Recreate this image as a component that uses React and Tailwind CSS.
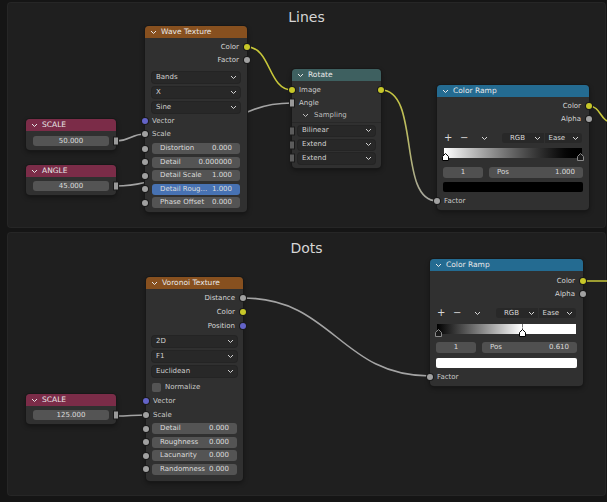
import React from "react";

const font = "font-['DejaVu_Sans',sans-serif]";

const SOCK = {
  yellow: "w-[6px] h-[6px] rounded-full bg-[#c7c729]",
  gray: "w-[6px] h-[6px] rounded-full bg-[#a1a1a1]",
  purple: "w-[6px] h-[6px] rounded-full bg-[#6363c7]",
  square: "w-[4px] h-[7px] bg-[#9a9a9a]",
  dark: "w-[4px] h-[7px] bg-[#5c5c5c]",
};

const Socket = ({ kind, side }) => (
  <span
    className={`absolute top-1/2 -translate-y-1/2 ${
      side === "left" ? "left-0 -translate-x-1/2" : "right-0 translate-x-1/2"
    } ${SOCK[kind]} shadow-[0_0_0_1px_#1a1a1a]`}
  />
);

const Chevron = ({ className = "" }) => (
  <svg width="7" height="5" viewBox="0 0 7 5" className={className}>
    <polyline points="1,1 3.5,3.5 6,1" fill="none" stroke="currentColor" strokeWidth="1" />
  </svg>
);

const Node = ({ pos, head, title, children, body = "" }) => (
  <div
    className={`absolute ${pos} rounded-[4px] bg-[#303030] shadow-[0_0_0_1px_#181818,0_2px_5px_rgba(0,0,0,0.45)] ${font} text-[7px] text-[#cacaca]`}
  >
    <div className={`${head} h-[12px] rounded-t-[4px] flex items-center gap-[4px] pl-[5px] text-[7.5px] text-[#e8e8e8]`}>
      <Chevron />
      <span>{title}</span>
    </div>
    <div className={body}>{children}</div>
  </div>
);

const Out = ({ label, s, h = "h-[13px]" }) => (
  <div className={`relative ${h} flex items-center justify-end pr-[8px] text-[#d6d6d6]`}>
    {label}
    <Socket kind={s} side="right" />
  </div>
);

const In = ({ label, s, h = "h-[13px]", cls = "" }) => (
  <div className={`relative ${h} ${cls} flex items-center pl-[7px]`}>
    <Socket kind={s} side="left" />
    {label}
  </div>
);

const Drop = ({ label, cls, sock, mx = "px-[7px]" }) => (
  <div className={`relative ${mx} ${cls}`}>
    {sock && <Socket kind={sock} side="left" />}
    <div className="h-full rounded-[3px] bg-[#282828] shadow-[0_0_0_1px_#242424] flex items-center justify-between pl-[4px] pr-[3px] text-[#d2d2d2]">
      <span>{label}</span>
      <Chevron />
    </div>
  </div>
);

const Field = ({ label, value, cls, active, mx = "px-[7px]" }) => (
  <div className={`relative ${mx} ${cls}`}>
    <Socket kind="gray" side="left" />
    <div
      className={`h-full rounded-[3px] ${
        active ? "bg-[#4772b3]" : "bg-[#545454]"
      } flex items-center justify-between px-[8px] text-[#dcdcdc]`}
    >
      <span>{label}</span>
      <span>{value}</span>
    </div>
  </div>
);

const Value = ({ pos, title, value, mt }) => (
  <Node pos={pos} head="bg-[#7b2c48]" title={title} body="pb-[4px]">
    <div className={`relative px-[7px] ${mt} h-[10px]`}>
      <div className="h-full rounded-[3px] bg-[#545454] flex items-center justify-center text-[#dcdcdc]">
        {value}
      </div>
      <Socket kind="square" side="right" />
    </div>
  </Node>
);

const Stop = ({ cls, light }) => (
  <svg width="7" height="8" viewBox="0 0 7 8" className={`absolute bottom-[-3px] ${cls}`}>
    <path d="M3.5 0.5 L6.5 3.5 V7.5 H0.5 V3.5 Z" fill={light ? "#ffffff" : "#1a1a1a"} stroke={light ? "#000" : "#8a8a8a"} strokeWidth="1" />
  </svg>
);

const Ramp = ({ pos, grad, swatch, pos2, stops, gaps }) => (
  <Node pos={pos} head="bg-[#246b91]" title="Color Ramp" body={`${gaps.pt} pb-[2.5px]`}>
    <Out label="Color" s="yellow" />
    <Out label="Alpha" s="gray" />
    <div className={`${gaps.ctrl} h-[10px] flex items-center px-[7px] text-[#d8d8d8]`}>
      <span className="text-[10px] leading-none w-[8px]">+</span>
      <span className="text-[10px] leading-none ml-[8px]">−</span>
      <Chevron className="ml-[13px]" />
      <div className="ml-auto flex h-full w-[80px] gap-[1px]">
        <div className="flex-1 rounded-l-[3px] bg-[#282828] flex items-center justify-between pl-[8px] pr-[3px]">
          <span>RGB</span>
          <Chevron />
        </div>
        <div className="flex-1 rounded-r-[3px] bg-[#282828] flex items-center justify-between pl-[4px] pr-[3px]">
          <span>Ease</span>
          <Chevron />
        </div>
      </div>
    </div>
    <div className={`relative mx-[7px] ${gaps.grad} h-[10px] ${grad}`}>{stops}</div>
    <div className={`${gaps.field} h-[11px] flex gap-[6px] px-[6px] text-[#dcdcdc]`}>
      <div className="w-[40px] rounded-[3px] bg-[#505050] flex items-center justify-center">1</div>
      <div className="flex-1 rounded-[3px] bg-[#505050] flex items-center justify-between px-[8px]">
        <span>Pos</span>
        <span>{pos2}</span>
      </div>
    </div>
    <div className={`mx-[6px] ${gaps.sw} h-[10px] rounded-[2px] ${swatch}`} />
    <In label="Factor" s="gray" cls="mt-[2.5px]" />
  </Node>
);

const Frame = ({ title, cls }) => (
  <div className={`${cls} rounded-[3px] bg-[#1f1f1f] shadow-[0_0_0_1px_#262626] flex justify-center ${font}`}>
    <span className="text-[14px] leading-[16px] text-[#d6d6d6]">{title}</span>
  </div>
);

const wire = (x1, y1, x2, y2, d) => `M${x1} ${y1} C${x1 + d} ${y1}, ${x2 - d} ${y2}, ${x2} ${y2}`;

const App = () => {
  return (
    <div className="relative w-[607px] h-[502px] overflow-hidden bg-[#151515] flex flex-col gap-[6px] pt-[3px] pl-[8px] pr-[2px]">
      <Frame title="Lines" cls="h-[224px] pt-[6px]" />
      <Frame title="Dots" cls="h-[262px] pt-[7px]" />

      <svg className="absolute left-0 top-0 w-[607px] h-[502px]" viewBox="0 0 607 502" fill="none">
        <defs>
          <linearGradient id="yg" gradientUnits="userSpaceOnUse" x1="381" y1="90" x2="437" y2="201">
            <stop offset="0" stopColor="#c8c83a" />
            <stop offset="1" stopColor="#a4a4a4" />
          </linearGradient>
        </defs>
        <g strokeWidth="1.6" strokeLinecap="round">
          <path d={wire(247, 47, 292, 90, 24)} stroke="#c8c83a" />
          <path d={wire(116, 186, 292, 103, 88)} stroke="#a4a4a4" />
          <path d={wire(116, 141, 145, 134, 14)} stroke="#a4a4a4" />
          <path d={wire(381, 90, 437, 201, 40)} stroke="url(#yg)" />
          <path d={wire(589, 106, 612, 122, 12)} stroke="#c8c83a" />
          <path d={wire(243, 298, 430, 376, 90)} stroke="#a4a4a4" />
          <path d={wire(116, 416, 146, 415, 14)} stroke="#a4a4a4" />
          <path d="M583 281 L610 281" stroke="#c8c83a" />
        </g>
      </svg>

      <Node pos="left-[145px] top-[26px] w-[102px]" head="bg-[#87501f]" title="Wave Texture" body="pt-[2.5px] pb-[4px]">
        <Out label="Color" s="yellow" />
        <Out label="Factor" s="gray" />
        <Drop label="Bands" cls="mt-[5.5px] h-[11px]" />
        <Drop label="X" cls="mt-[4px] h-[11px]" />
        <Drop label="Sine" cls="mt-[4px] h-[11px]" />
        <In label="Vector" s="purple" cls="mt-[1.5px]" />
        <In label="Scale" s="gray" />
        <Field label="Distortion" value="0.000" cls="mt-[2.5px] h-[11px]" />
        <Field label="Detail" value="0.000000" cls="mt-[2.5px] h-[11px]" />
        <Field label="Detail Scale" value="1.000" cls="mt-[2.5px] h-[11px]" />
        <Field label="Detail Roug..." value="1.000" cls="mt-[2.5px] h-[11px]" active />
        <Field label="Phase Offset" value="0.000" cls="mt-[2.5px] h-[11px]" />
      </Node>

      <Value pos="left-[26px] top-[119px] w-[90px]" title="SCALE" value="50.000" mt="mt-[5px]" />
      <Value pos="left-[26px] top-[165px] w-[90px]" title="ANGLE" value="45.000" mt="mt-[4px]" />

      <Node pos="left-[292px] top-[69px] w-[89px]" head="bg-[#3e6060]" title="Rotate" body="pt-[2.5px] pb-[4px]">
        <div className="relative h-[13px] flex items-center pl-[7px]">
          <Socket kind="yellow" side="left" />
          Image
          <Socket kind="yellow" side="right" />
        </div>
        <In label="Angle" s="square" />
        <div className="h-[13px] flex items-center gap-[5px] pl-[10px] text-[#bdbdbd] border-b border-[#282828]">
          <Chevron />
          <span>Sampling</span>
        </div>
        <Drop label="Bilinear" cls="mt-[3px] h-[10px]" sock="dark" mx="px-[6px]" />
        <Drop label="Extend" cls="mt-[4px] h-[10px]" sock="dark" mx="px-[6px]" />
        <Drop label="Extend" cls="mt-[3px] h-[11px]" sock="dark" mx="px-[6px]" />
      </Node>

      <Ramp
        pos="left-[437px] top-[85px] w-[152px]"
        grad="bg-gradient-to-r from-white to-black"
        swatch="bg-black"
        pos2="1.000"
        gaps={{ pt: "pt-[2.5px]", ctrl: "mt-[7.5px]", grad: "mt-[5px]", field: "mt-[9px]", sw: "mt-[4px]" }}
        stops={
          <>
            <Stop cls="left-[-2px]" light />
            <Stop cls="right-[-2px]" />
          </>
        }
      />

      <Node pos="left-[146px] top-[277px] w-[97px]" head="bg-[#87501f]" title="Voronoi Texture" body="pt-[2px] pb-[6px]">
        <Out label="Distance" s="gray" h="h-[14px]" />
        <Out label="Color" s="yellow" h="h-[14px]" />
        <Out label="Position" s="purple" h="h-[14px]" />
        <Drop label="2D" cls="mt-[3px] h-[11px]" mx="px-[6px]" />
        <Drop label="F1" cls="mt-[4px] h-[11px]" mx="px-[6px]" />
        <Drop label="Euclidean" cls="mt-[4px] h-[11px]" mx="px-[6px]" />
        <div className="mt-[4px] h-[13px] flex items-center pl-[6px]">
          <span className="w-[9px] h-[9px] rounded-[2px] bg-[#545454] mr-[4px]" />
          Normalize
        </div>
        <In label="Vector" s="purple" h="h-[14px]" />
        <In label="Scale" s="gray" h="h-[14px]" />
        <Field label="Detail" value="0.000" cls="mt-[1px] h-[11px]" mx="px-[6px]" />
        <Field label="Roughness" value="0.000" cls="mt-[2.5px] h-[11px]" mx="px-[6px]" />
        <Field label="Lacunarity" value="0.000" cls="mt-[2.5px] h-[11px]" mx="px-[6px]" />
        <Field label="Randomness" value="0.000" cls="mt-[2.5px] h-[11px]" mx="px-[6px]" />
      </Node>

      <Value pos="left-[26px] top-[394px] w-[90px]" title="SCALE" value="125.000" mt="mt-[4px]" />

      <Ramp
        pos="left-[430px] top-[259px] w-[153px]"
        grad="bg-[linear-gradient(to_right,#000_0%,#fff_61%,#fff_100%)]"
        swatch="bg-white"
        pos2="0.610"
        gaps={{ pt: "pt-[3.5px]", ctrl: "mt-[7.5px]", grad: "mt-[6px]", field: "mt-[8px]", sw: "mt-[5px]" }}
        stops={
          <>
            <Stop cls="left-[-2px]" />
            <div className="absolute left-[61%] top-0 h-full border-l border-dashed border-[#777]" />
            <Stop cls="left-[calc(61%-3px)]" light />
          </>
        }
      />
    </div>
  );
};

export default App;
